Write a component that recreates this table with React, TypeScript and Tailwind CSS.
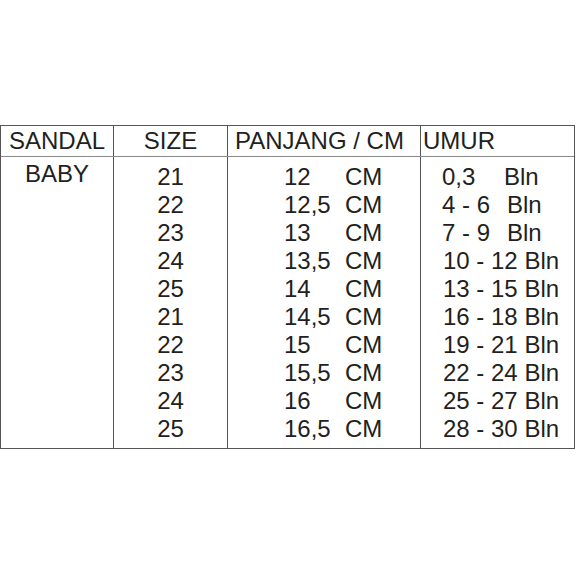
const sizes = ['21', '22', '23', '24', '25', '21', '22', '23', '24', '25']

const lengths = ['12', '12,5', '13', '13,5', '14', '14,5', '15', '15,5', '16', '16,5']

// first three ages have extra gap before "Bln"
const ages: [string, number | null][] = [
  ['0,3', 62],
  ['4 - 6', 65],
  ['7 - 9', 65],
  ['10 - 12', null],
  ['13 - 15', null],
  ['16 - 18', null],
  ['19 - 21', null],
  ['22 - 24', null],
  ['25 - 27', null],
  ['28 - 30', null],
]

const App = () => {
  return (
    <div className="w-[576px] h-[576px] bg-white pt-[125px] font-['Liberation_Sans',Arial,sans-serif] text-[#231f20] text-[24px] leading-[28px]">
      <div className="w-[575px] border border-[#555]">
        <div className="flex h-[31px] border-b border-[#8a8a8a]">
          <div className="w-[112px] text-center pt-[1px]">SANDAL</div>
          <div className="w-[114px] border-l border-[#555] text-center pt-[1px]">SIZE</div>
          <div className="w-[193px] border-l border-[#555] pl-[7px] pt-[1px] whitespace-nowrap">
            PANJANG / CM
          </div>
          <div className="flex-1 border-l border-[#555] pl-[2px] pt-[1px]">UMUR</div>
        </div>

        <div className="flex">
          <div className="w-[112px] text-center pt-[3px]">BABY</div>
          <div className="w-[114px] border-l border-[#555] text-center pt-[6px] pb-[5px]">
            {sizes.map((s, i) => (
              <div key={i}>{s}</div>
            ))}
          </div>
          <div className="w-[193px] border-l border-[#555] pl-[56px] pt-[6px] pb-[5px]">
            {lengths.map((l, i) => (
              <div key={i} className="flex whitespace-nowrap">
                <span className="w-[61px]">{l}</span>
                <span>CM</span>
              </div>
            ))}
          </div>
          <div className="flex-1 border-l border-[#555] pl-[21px] pt-[6px] pb-[5px]">
            {ages.map(([a, w], i) =>
              w ? (
                <div key={i} className="flex whitespace-nowrap">
                  <span style={{ width: w }}>{a}</span>
                  <span>Bln</span>
                </div>
              ) : (
                <div key={i} className="whitespace-pre pl-[1px]">
                  {a} Bln
                </div>
              )
            )}
          </div>
        </div>
      </div>
    </div>
  )
}

export default App
